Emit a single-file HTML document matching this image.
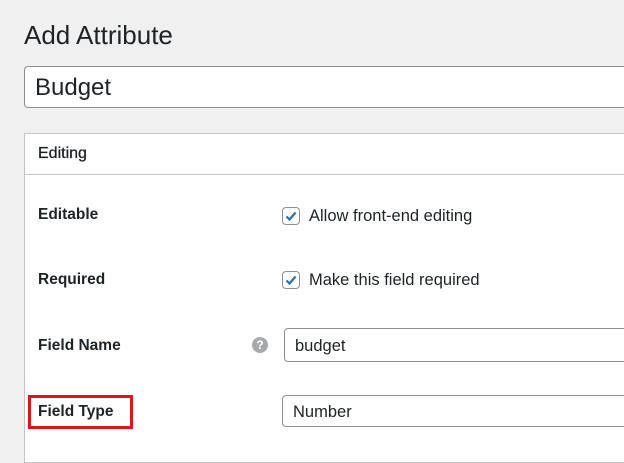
<!DOCTYPE html>
<html><head><style>
*{box-sizing:border-box;margin:0;padding:0}
body{width:624px;height:454px;overflow:hidden;background:#f0f0f1;font-family:"Liberation Sans",sans-serif;color:#1d2327;position:relative}
.a{position:absolute}
.lbl{position:absolute;left:38px;font-size:15.5px;font-weight:bold}
.cb{position:absolute;left:282px;width:18px;height:18px;border:1px solid #8c8f94;border-radius:4px;background:#fff}
.txt{position:absolute;left:309px;font-size:16.5px}
.inp{position:absolute;background:#fff;border:1px solid #8c8f94;border-right:none;border-radius:4px 0 0 4px;font-size:16.5px;padding-left:10px}
</style></head><body>
<div class="a" style="left:24px;top:20px;font-size:26px">Add Attribute</div>
<div class="inp" style="left:24px;top:66px;width:610px;height:42px;font-size:24px;line-height:42px;padding-left:10px">Budget</div>
<div class="a" style="left:24px;top:133px;width:610px;height:330px;background:#fff;border:1px solid #c3c4c7"></div>
<div class="a" style="left:25px;top:174px;width:610px;height:1px;background:#c3c4c7"></div>
<div class="lbl" style="top:145px;font-weight:normal;font-size:16px;-webkit-text-stroke:0.3px">Editing</div>
<div class="lbl" style="top:206px">Editable</div>
<div class="cb" style="top:207px"><svg width="16" height="16" viewBox="0 0 16 16" style="position:absolute;left:0;top:0"><path d="M3.5 8.5l3 3 6-7" stroke="#2271b1" stroke-width="2.2" fill="none"/></svg></div>
<div class="txt" style="top:207px">Allow front-end editing</div>
<div class="lbl" style="top:271px">Required</div>
<div class="cb" style="top:271px"><svg width="16" height="16" viewBox="0 0 16 16" style="position:absolute;left:0;top:0"><path d="M3.5 8.5l3 3 6-7" stroke="#2271b1" stroke-width="2.2" fill="none"/></svg></div>
<div class="txt" style="top:271px">Make this field required</div>
<div class="lbl" style="top:337px">Field Name</div>
<div class="a" style="left:252px;top:337px;width:16px;height:16px;border-radius:50%;background:#a7aaad;color:#fff;font-size:12px;font-weight:bold;text-align:center;line-height:16px">?</div>
<div class="inp" style="left:284px;top:328px;width:350px;height:34px;line-height:34px">budget</div>
<div class="a" style="left:28px;top:395px;width:105px;height:34px;border:3px solid #e0141b"></div>
<div class="lbl" style="top:403px">Field Type</div>
<div class="inp" style="left:282px;top:395px;width:350px;height:32px;line-height:32px">Number</div>
</body></html>
